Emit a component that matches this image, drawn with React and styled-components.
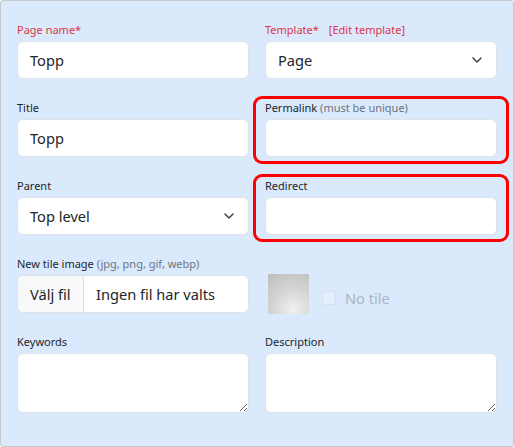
import React from "react";
import styled, { createGlobalStyle } from "styled-components";

const GlobalStyle = createGlobalStyle`
  html, body { margin: 0; padding: 0; background: #ffffff; }
  body { font-family: "Noto Sans", "Open Sans", sans-serif; color: #212529; }
  * { box-sizing: border-box; }
`;

const Panel = styled.div`
  width: 514px;
  height: 447px;
  background: #dbe9fd;
  border: 1px solid #c5c9ce;
  border-radius: 3px;
  padding: 18px 16px 16px;
`;

const Grid = styled.div`
  display: grid;
  grid-template-columns: 232px 232px;
  column-gap: 16px;
  row-gap: 18px;
`;

const Field = styled.div`
  position: relative;
  display: flex;
  flex-direction: column;
  ${(p) =>
    p.$highlight &&
    `
    &::before {
      content: "";
      position: absolute;
      top: -1px;
      left: -12px;
      right: -12px;
      bottom: -7px;
      border: 3px solid #ff0000;
      border-radius: 9px;
      pointer-events: none;
    }
  `}
`;

const Label = styled.label`
  display: block;
  font-size: 11px;
  line-height: 20px;
  height: 20px;
  margin-bottom: 2px;
  padding-top: 1px;
  color: ${(p) => (p.$required ? "#dc3545" : "#212529")};
  white-space: nowrap;
`;

const Hint = styled.span`
  color: #6c757d;
`;

const EditLink = styled.span`
  color: #dc3545;
  margin-left: 10px;
`;

const Input = styled.div`
  height: 38px;
  background: #ffffff;
  border: 1px solid #dee2e6;
  border-radius: 6px;
  padding: 0 12px;
  display: flex;
  align-items: center;
  font-size: 14.6px;
  color: #212529;
`;

const Select = styled(Input)`
  justify-content: space-between;
  padding-right: 14px;
`;

const Chevron = () => (
  <svg width="10" height="6" viewBox="0 0 10 6" fill="none">
    <path d="M1 1l4 4 4-4" stroke="#343a40" strokeWidth="1.4" strokeLinecap="round" strokeLinejoin="round" />
  </svg>
);

const FileBox = styled.div`
  height: 38px;
  background: #ffffff;
  border: 1px solid #dee2e6;
  border-radius: 6px;
  display: flex;
  align-items: stretch;
  overflow: hidden;
  font-size: 14.6px;
`;

const FileButton = styled.div`
  width: 66px;
  background: #f8f9fa;
  border-right: 1px solid #dee2e6;
  display: flex;
  align-items: center;
  padding-left: 12px;
`;

const FileName = styled.div`
  display: flex;
  align-items: center;
  padding-left: 12px;
`;

const TileCell = styled.div`
  display: flex;
  align-items: flex-end;
  padding-left: 3px;
  margin-bottom: -1px;
`;

const Thumb = styled.div`
  width: 41px;
  height: 40px;
  background: radial-gradient(circle at 62% 88%, #f0f0f0 0%, #d6d6d6 45%, #bdbdbd 100%);
`;

const CheckLabel = styled.label`
  display: flex;
  align-items: center;
  gap: 9px;
  margin-left: 13px;
  margin-bottom: 4px;
  font-size: 14.6px;
  line-height: 24px;
  color: #a9b6c6;
`;

const Box = styled.span`
  width: 14px;
  height: 14px;
  border: 1px solid #d3e0f1;
  background: #e4eefc;
  border-radius: 3px;
`;

const TextArea = styled.textarea`
  height: 60px;
  width: 100%;
  background: #ffffff;
  border: 1px solid #dee2e6;
  border-radius: 6px;
  resize: vertical;
  font-family: inherit;
  font-size: 14.6px;
  display: block;
`;

export default function App() {
  return (
    <>
      <GlobalStyle />
      <Panel>
        <Grid>
          <Field>
            <Label $required>Page name*</Label>
            <Input>Topp</Input>
          </Field>
          <Field>
            <Label $required>
              Template*<EditLink>[Edit template]</EditLink>
            </Label>
            <Select>
              <span>Page</span>
              <Chevron />
            </Select>
          </Field>

          <Field>
            <Label>Title</Label>
            <Input>Topp</Input>
          </Field>
          <Field $highlight>
            <Label>
              Permalink <Hint>(must be unique)</Hint>
            </Label>
            <Input />
          </Field>

          <Field>
            <Label>Parent</Label>
            <Select>
              <span>Top level</span>
              <Chevron />
            </Select>
          </Field>
          <Field $highlight>
            <Label>Redirect</Label>
            <Input />
          </Field>

          <Field>
            <Label>
              New tile image <Hint>(jpg, png, gif, webp)</Hint>
            </Label>
            <FileBox>
              <FileButton>Välj fil</FileButton>
              <FileName>Ingen fil har valts</FileName>
            </FileBox>
          </Field>
          <TileCell>
            <Thumb />
            <CheckLabel>
              <Box />
              No tile
            </CheckLabel>
          </TileCell>

          <Field>
            <Label>Keywords</Label>
            <TextArea />
          </Field>
          <Field>
            <Label>Description</Label>
            <TextArea />
          </Field>
        </Grid>
      </Panel>
    </>
  );
}
